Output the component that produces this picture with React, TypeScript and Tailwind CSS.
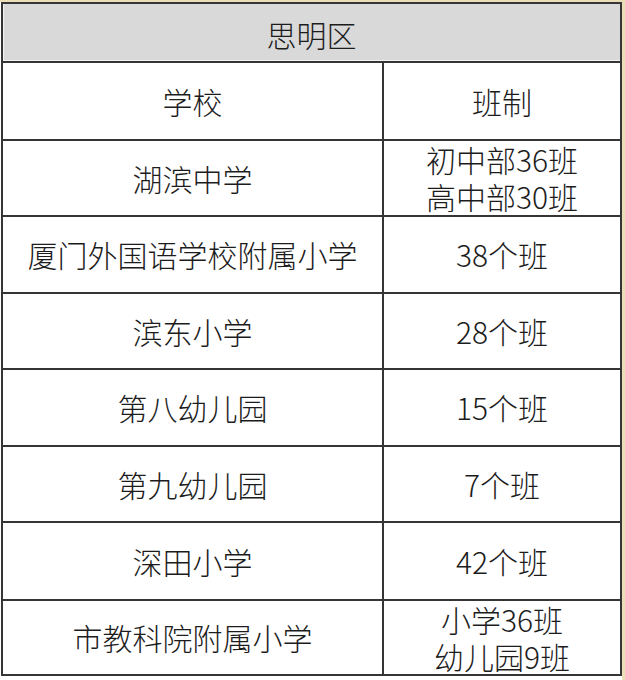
import React from "react";

type Row = { name: string; classes: string[]; h: string };

const rows: Row[] = [
  { name: "湖滨中学", classes: ["初中部36班", "高中部30班"], h: "h-[76px]" },
  { name: "厦门外国语学校附属小学", classes: ["38个班"], h: "h-[77px]" },
  { name: "滨东小学", classes: ["28个班"], h: "h-[76px]" },
  { name: "第八幼儿园", classes: ["15个班"], h: "h-[77px]" },
  { name: "第九幼儿园", classes: ["7个班"], h: "h-[76px]" },
  { name: "深田小学", classes: ["42个班"], h: "h-[78px]" },
  { name: "市教科院附属小学", classes: ["小学36班", "幼儿园9班"], h: "h-[73px]" },
];

export default function App() {
  return (
    <div
      className="w-[625px] h-[680px] bg-white flex flex-col text-[#1c1c1c] text-[30px] leading-[37px] font-light"
      style={{ fontFamily: '"Noto Sans CJK SC", "Noto Sans", sans-serif' }}
    >
      <div className="h-[2px] w-full bg-[#e9deb6]" />
      <div className="flex flex-1">
        <div className="w-[1px]" />
        <div className="w-[621px] self-start border-2 border-[#353535] flex flex-col">
          <div className="h-[59px] bg-[#d9d9d9] border-b-2 border-[#353535] flex items-center justify-center pt-[3px] shadow-[inset_1px_0_0_#f2f2f2,inset_0_-1px_0_#f2f2f2]">
            思明区
          </div>
          <div className="h-[78px] flex border-b-2 border-[#353535]">
            <div className="w-[379px] border-r-2 border-[#353535] box-content flex items-center justify-center">
              学校
            </div>
            <div className="flex-1 flex items-center justify-center">班制</div>
          </div>
          {rows.map((r, i) => (
            <div
              key={r.name}
              className={`${r.h} flex ${i < rows.length - 1 ? "border-b-2 border-[#353535]" : ""}`}
            >
              <div className="w-[379px] border-r-2 border-[#353535] box-content flex items-center justify-center">
                {r.name}
              </div>
              <div className="flex-1 flex items-center justify-center text-center">
                {r.classes.length > 1 ? (
                  <p>
                    {r.classes[0]}
                    <br />
                    {r.classes[1]}
                  </p>
                ) : (
                  <p>{r.classes[0]}</p>
                )}
              </div>
            </div>
          ))}
        </div>
        <div className="flex-1 bg-[#e9deb6]" />
      </div>
    </div>
  );
}
